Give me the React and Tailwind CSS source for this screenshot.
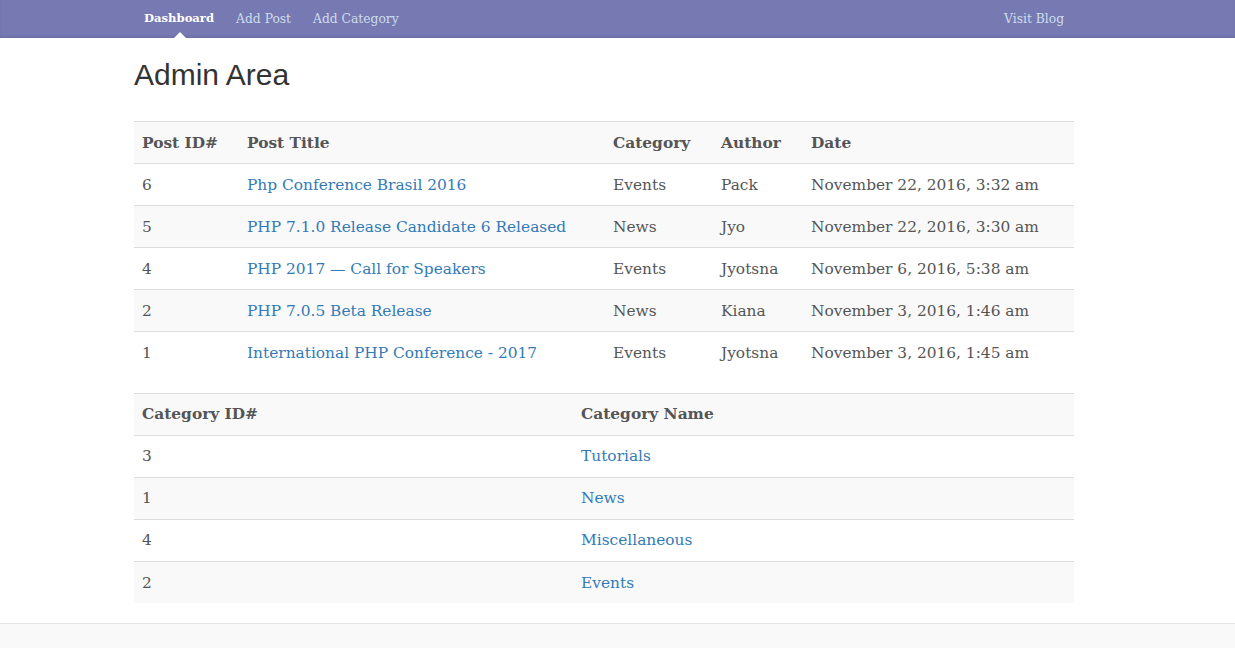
const posts = [
  { id: 6, title: 'Php Conference Brasil 2016', category: 'Events', author: 'Pack', date: 'November 22, 2016, 3:32 am' },
  { id: 5, title: 'PHP 7.1.0 Release Candidate 6 Released', category: 'News', author: 'Jyo', date: 'November 22, 2016, 3:30 am' },
  { id: 4, title: 'PHP 2017 — Call for Speakers', category: 'Events', author: 'Jyotsna', date: 'November 6, 2016, 5:38 am' },
  { id: 2, title: 'PHP 7.0.5 Beta Release', category: 'News', author: 'Kiana', date: 'November 3, 2016, 1:46 am' },
  { id: 1, title: 'International PHP Conference - 2017', category: 'Events', author: 'Jyotsna', date: 'November 3, 2016, 1:45 am' },
]

const categories = [
  { id: 3, name: 'Tutorials' },
  { id: 1, name: 'News' },
  { id: 4, name: 'Miscellaneous' },
  { id: 2, name: 'Events' },
]

// header row counts as the first striped row
const rowBg = i => (i % 2 === 0 ? 'bg-white' : 'bg-[#f9f9f9]')

function Nav() {
  return (
    <nav className="h-[38px] bg-[#7779b3] shadow-[inset_0_-2px_2px_rgba(0,0,0,0.08)]">
      <div className="w-[940px] ml-[134px] h-full flex items-center justify-between text-[12.3px]">
        <div className="flex h-full">
          <a className="relative h-full flex items-center pl-[10px] pr-[11px] text-[11.6px] font-bold text-white">
            Dashboard
            <span className="absolute bottom-0 left-1/2 -translate-x-1/2 w-0 h-0 border-l-[6px] border-r-[6px] border-b-[6px] border-l-transparent border-r-transparent border-b-white" />
          </a>
          <a className="h-full flex items-center px-[11px] text-[#cdddeb]">Add Post</a>
          <a className="h-full flex items-center px-[11px] text-[#cdddeb]">Add Category</a>
        </div>
        <a className="h-full flex items-center px-[10px] text-[#cdddeb]">Visit Blog</a>
      </div>
    </nav>
  )
}

function PostsTable() {
  const cols = ['w-[105px]', 'w-[366px]', 'w-[108px]', 'w-[90px]', '']
  return (
    <table className="w-full border-collapse mb-[19px] table-fixed">
      <colgroup>
        {cols.map((c, i) => <col key={i} className={c} />)}
      </colgroup>
      <thead>
        <tr className="bg-[#f9f9f9] border-t border-[#dddddd]">
          {['Post ID#', 'Post Title', 'Category', 'Author', 'Date'].map(h => (
            <th key={h} className="text-left font-bold px-2 pt-[2px] h-[42px] border-b border-[#dddddd]">{h}</th>
          ))}
        </tr>
      </thead>
      <tbody>
        {posts.map((p, i) => (
          <tr key={p.id} className={`${rowBg(i)} ${i > 0 ? 'border-t border-[#dddddd]' : ''}`}>
            <td className="px-2 pt-[2px] h-[42px]">{p.id}</td>
            <td className="px-2 pt-[2px] h-[42px] whitespace-nowrap">
              <a className="text-[#337ab7]">{p.title}</a>
            </td>
            <td className="px-2 pt-[2px] h-[42px]">{p.category}</td>
            <td className="px-2 pt-[2px] h-[42px]">{p.author}</td>
            <td className="px-2 pt-[2px] h-[42px] whitespace-nowrap">{p.date}</td>
          </tr>
        ))}
      </tbody>
    </table>
  )
}

function CategoryTable() {
  return (
    <table className="w-full border-collapse table-fixed">
      <colgroup>
        <col className="w-[439px]" />
        <col />
      </colgroup>
      <thead>
        <tr className="bg-[#f9f9f9] border-t border-[#dddddd]">
          <th className="text-left font-bold px-2 pt-[2px] h-[42px] border-b border-[#dddddd]">Category ID#</th>
          <th className="text-left font-bold px-2 pt-[2px] h-[42px] border-b border-[#dddddd]">Category Name</th>
        </tr>
      </thead>
      <tbody>
        {categories.map((c, i) => (
          <tr key={c.id} className={`${rowBg(i)} ${i > 0 ? 'border-t border-[#dddddd]' : ''}`}>
            <td className="px-2 pt-[2px] h-[42px]">{c.id}</td>
            <td className="px-2 pt-[2px] h-[42px]"><a className="text-[#337ab7]">{c.name}</a></td>
          </tr>
        ))}
      </tbody>
    </table>
  )
}

export default function App() {
  return (
    <div className="bg-white min-h-[648px] flex flex-col" style={{ fontFamily: '"DejaVu Serif", Georgia, serif' }}>
      <Nav />
      <main className="w-[940px] ml-[134px] text-[15.4px] text-[#555555]">
        <h1 className="text-[30px] text-[#333333] mt-[20px] mb-[30px] leading-[33px]" style={{ fontFamily: '"Liberation Sans", Arial, sans-serif' }}>
          Admin Area
        </h1>
        <PostsTable />
        <CategoryTable />
      </main>
      <footer className="mt-[20px] flex-1 border-t border-[#e5e5e5] bg-[#f9f9f9]" />
    </div>
  )
}
